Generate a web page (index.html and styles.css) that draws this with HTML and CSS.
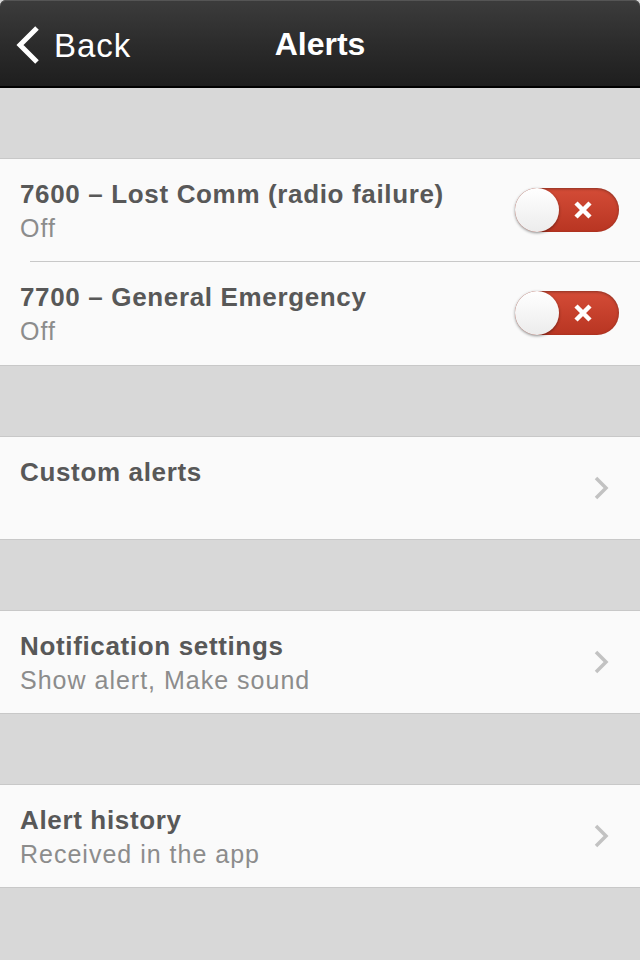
FILE: index.html
```html
<!DOCTYPE html>
<html lang="en">
<head>
    <meta charset="UTF-8">
    <meta name="viewport" content="width=device-width, initial-scale=1.0">
    <title>Alerts</title>
    <link rel="stylesheet" href="styles.css">
</head>
<body>

    <div class="navbar">
        <a class="back" href="#">
            <svg class="back-icon" width="26" height="40" viewBox="0 0 26 40">
                <path d="M21 3 L4 20 L21 37" fill="none" stroke="#fff" stroke-width="5" stroke-linecap="butt" stroke-linejoin="miter"/>
            </svg>
            <span>Back</span>
        </a>
        <h1>Alerts</h1>
    </div>

    <div class="content">
        <div class="group first">
            <div class="row">
                <div class="text">
                    <div class="title">7600 – Lost Comm (radio failure)</div>
                    <div class="subtitle">Off</div>
                </div>
                <div class="switch">
                    <div class="knob"></div>
                    <svg class="cross" width="20" height="20" viewBox="0 0 20 20">
                        <path d="M3 3 L17 17 M17 3 L3 17" stroke="#fff" stroke-width="4.5"/>
                    </svg>
                </div>
            </div>
            <div class="divider"></div>
            <div class="row">
                <div class="text">
                    <div class="title">7700 – General Emergency</div>
                    <div class="subtitle">Off</div>
                </div>
                <div class="switch">
                    <div class="knob"></div>
                    <svg class="cross" width="20" height="20" viewBox="0 0 20 20">
                        <path d="M3 3 L17 17 M17 3 L3 17" stroke="#fff" stroke-width="4.5"/>
                    </svg>
                </div>
            </div>
        </div>

        <div class="group">
            <div class="row">
                <div class="text">
                    <div class="title">Custom alerts</div>
                </div>
                <svg class="chevron" width="16" height="24" viewBox="0 0 16 24">
                    <path d="M3 2 L13 12 L3 22" fill="none" stroke="#c2c2c2" stroke-width="3.5"/>
                </svg>
            </div>
        </div>

        <div class="group">
            <div class="row">
                <div class="text">
                    <div class="title">Notification settings</div>
                    <div class="subtitle">Show alert, Make sound</div>
                </div>
                <svg class="chevron" width="16" height="24" viewBox="0 0 16 24">
                    <path d="M3 2 L13 12 L3 22" fill="none" stroke="#c2c2c2" stroke-width="3.5"/>
                </svg>
            </div>
        </div>

        <div class="group">
            <div class="row">
                <div class="text">
                    <div class="title">Alert history</div>
                    <div class="subtitle">Received in the app</div>
                </div>
                <svg class="chevron" width="16" height="24" viewBox="0 0 16 24">
                    <path d="M3 2 L13 12 L3 22" fill="none" stroke="#c2c2c2" stroke-width="3.5"/>
                </svg>
            </div>
        </div>
    </div>

</body>
</html>
```

FILE: styles.css
```css
body {
    font-family: "Liberation Sans", Arial, sans-serif;
    background-color: #d8d8d8;
    margin: 0;
    min-height: 960px;
}
.navbar {
    height: 86px;
    background: linear-gradient(#3c3c3c, #2c2c2c 50%, #1e1e1e);
    border-bottom: 2px solid #000;
    border-radius: 6px 6px 0 0;
    box-shadow: inset 0 1px 0 #555;
    display: flex;
    align-items: center;
    justify-content: center;
    position: relative;
}
.navbar h1 {
    margin: 0;
    font-size: 32px;
    font-weight: bold;
    color: #fff;
    padding-top: 2px;
}
.back {
    position: absolute;
    left: 16px;
    top: 24px;
    display: flex;
    align-items: center;
    gap: 12px;
    color: #fff;
    text-decoration: none;
    font-size: 33px;
    letter-spacing: 1px;
}
.back span {
    line-height: 40px;
    padding-top: 2px;
}
.content {
    padding: 70px 0;
    display: flex;
    flex-direction: column;
    gap: 70px;
}
.group {
    background-color: #fafafa;
    border-top: 1px solid #c8c8c8;
    border-bottom: 1px solid #c8c8c8;
}
.group.first {
    padding-bottom: 1px;
}
.row {
    height: 102px;
    box-sizing: border-box;
    padding: 0 21px 0 20px;
    display: flex;
    align-items: center;
}
.text {
    flex: 1;
    align-self: flex-start;
    padding-top: 19px;
}
.title {
    font-size: 26px;
    line-height: 32px;
    font-weight: bold;
    color: #585858;
    letter-spacing: 0.65px;
}
.subtitle {
    font-size: 25px;
    line-height: 30px;
    color: #8c8c8c;
    margin-top: 3px;
    letter-spacing: 1px;
}
.divider {
    height: 1px;
    background-color: #c8c8c8;
    margin-left: 30px;
}
.switch {
    width: 104px;
    height: 44px;
    border-radius: 22px;
    background: linear-gradient(#d44c37, #b83522);
    box-shadow: inset 0 1px 3px rgba(0, 0, 0, 0.35);
    position: relative;
    display: flex;
    align-items: center;
}
.knob {
    width: 44px;
    height: 44px;
    border-radius: 50%;
    background: linear-gradient(#ffffff, #ececec);
    box-shadow: 0 1px 3px rgba(0, 0, 0, 0.45);
}
.cross {
    position: absolute;
    left: 58px;
    top: 12px;
}
.chevron {
    margin-right: 10px;
}
```
